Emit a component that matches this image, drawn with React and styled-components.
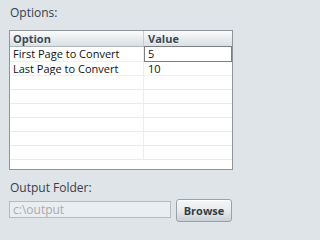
import React from "react";
import styled, { createGlobalStyle } from "styled-components";

const Global = createGlobalStyle`
  html, body { margin: 0; padding: 0; background: #dfe4e9; }
  body { font-family: "Open Sans", "DejaVu Sans", sans-serif; }
`;

const Panel = styled.div`
  width: 239px;
  height: 230px;
  box-sizing: border-box;
  padding: 4px 7px 0 9px;
  background: #dfe4e9;
  display: flex;
  flex-direction: column;
`;

const Label = styled.div`
  font-size: 12px;
  color: #34414d;
  height: ${(p) => p.$h}px;
  line-height: 18px;
  padding-left: 1px;
`;

const Table = styled.div`
  width: 224px;
  height: 140px;
  box-sizing: border-box;
  border: 1px solid #8e9499;
  background: #fff;
  display: flex;
  flex-direction: column;
  overflow: hidden;
`;

const Row = styled.div`
  display: grid;
  grid-template-columns: 134px 1fr;
  height: ${(p) => p.$h}px;
  flex: none;
  border-bottom: 1px solid ${(p) => p.$line};
  background: ${(p) => p.$bg || "#fff"};
  box-sizing: border-box;
`;

const Cell = styled.div`
  font-size: 11px;
  font-weight: ${(p) => (p.$bold ? 700 : 400)};
  color: ${(p) => (p.$bold ? "#3a4855" : "#111")};
  text-shadow: ${(p) => (p.$bold ? "0 1px 0 rgba(255,255,255,0.8)" : "none")};
  padding-left: ${(p) => p.$pl || 3}px;
  line-height: ${(p) => p.$lh}px;
  border-right: ${(p) => (p.$first ? `1px solid ${p.$div || "#eceef0"}` : "none")};
  box-sizing: border-box;
  white-space: nowrap;
  overflow: hidden;
`;

const SelectedCell = styled(Cell)`
  border: 1px solid #7a7f84;
  margin-top: -1px;
  height: 16px;
`;

const Spacer = styled.div`
  height: ${(p) => p.$h}px;
  flex: none;
`;

const Bottom = styled.div`
  display: flex;
  align-items: flex-start;
  gap: 5px;
`;

const Input = styled.div`
  width: 162px;
  height: 17px;
  margin-top: 2px;
  box-sizing: border-box;
  border: 1px solid #b5bbc0;
  background: #ebeef1;
  font-size: 12px;
  color: #a6abb0;
  padding-left: 3px;
  line-height: 15px;
`;

const Button = styled.div`
  width: 56px;
  height: 23px;
  box-sizing: border-box;
  border: 1px solid #9aa2a9;
  border-radius: 3px;
  background: linear-gradient(#f4f6f7 0%, #e8ebee 50%, #c9d1d7 100%);
  font-size: 11px;
  font-weight: 700;
  color: #303c46;
  display: flex;
  align-items: center;
  justify-content: center;
  box-shadow: inset 0 1px 0 #fff;
`;

const data = [
  ["First Page to Convert", "5"],
  ["Last Page to Convert", "10"],
];

export default function App() {
  const empty = Array.from({ length: 6 });
  return (
    <>
      <Global />
      <Panel>
        <Label $h={26}>Options:</Label>
        <Table>
          <Row $h={16} $line="#aeb5bb" $bg="linear-gradient(#fafbfc, #d9dfe3)">
            <Cell $bold $first $div="#c8cdd1" $lh={15}>Option</Cell>
            <Cell $bold $lh={15} $pl={4}>Value</Cell>
          </Row>
          <Row $h={15} $line="#eef0f2">
            <Cell $first $lh={14}>{data[0][0]}</Cell>
            <SelectedCell $lh={14}>{data[0][1]}</SelectedCell>
          </Row>
          <Row $h={14} $line="#eef0f2">
            <Cell $first $lh={13}>{data[1][0]}</Cell>
            <Cell $lh={13} $pl={4}>{data[1][1]}</Cell>
          </Row>
          {empty.map((_, i) => (
            <Row key={i} $h={14} $line="#e9ecee">
              <Cell $first $lh={13} />
              <Cell $lh={13} />
            </Row>
          ))}
        </Table>
        <Spacer $h={9} />
        <Label $h={20}>Output Folder:</Label>
        <Bottom>
          <Input>c:\output</Input>
          <Button>Browse</Button>
        </Bottom>
      </Panel>
    </>
  );
}
